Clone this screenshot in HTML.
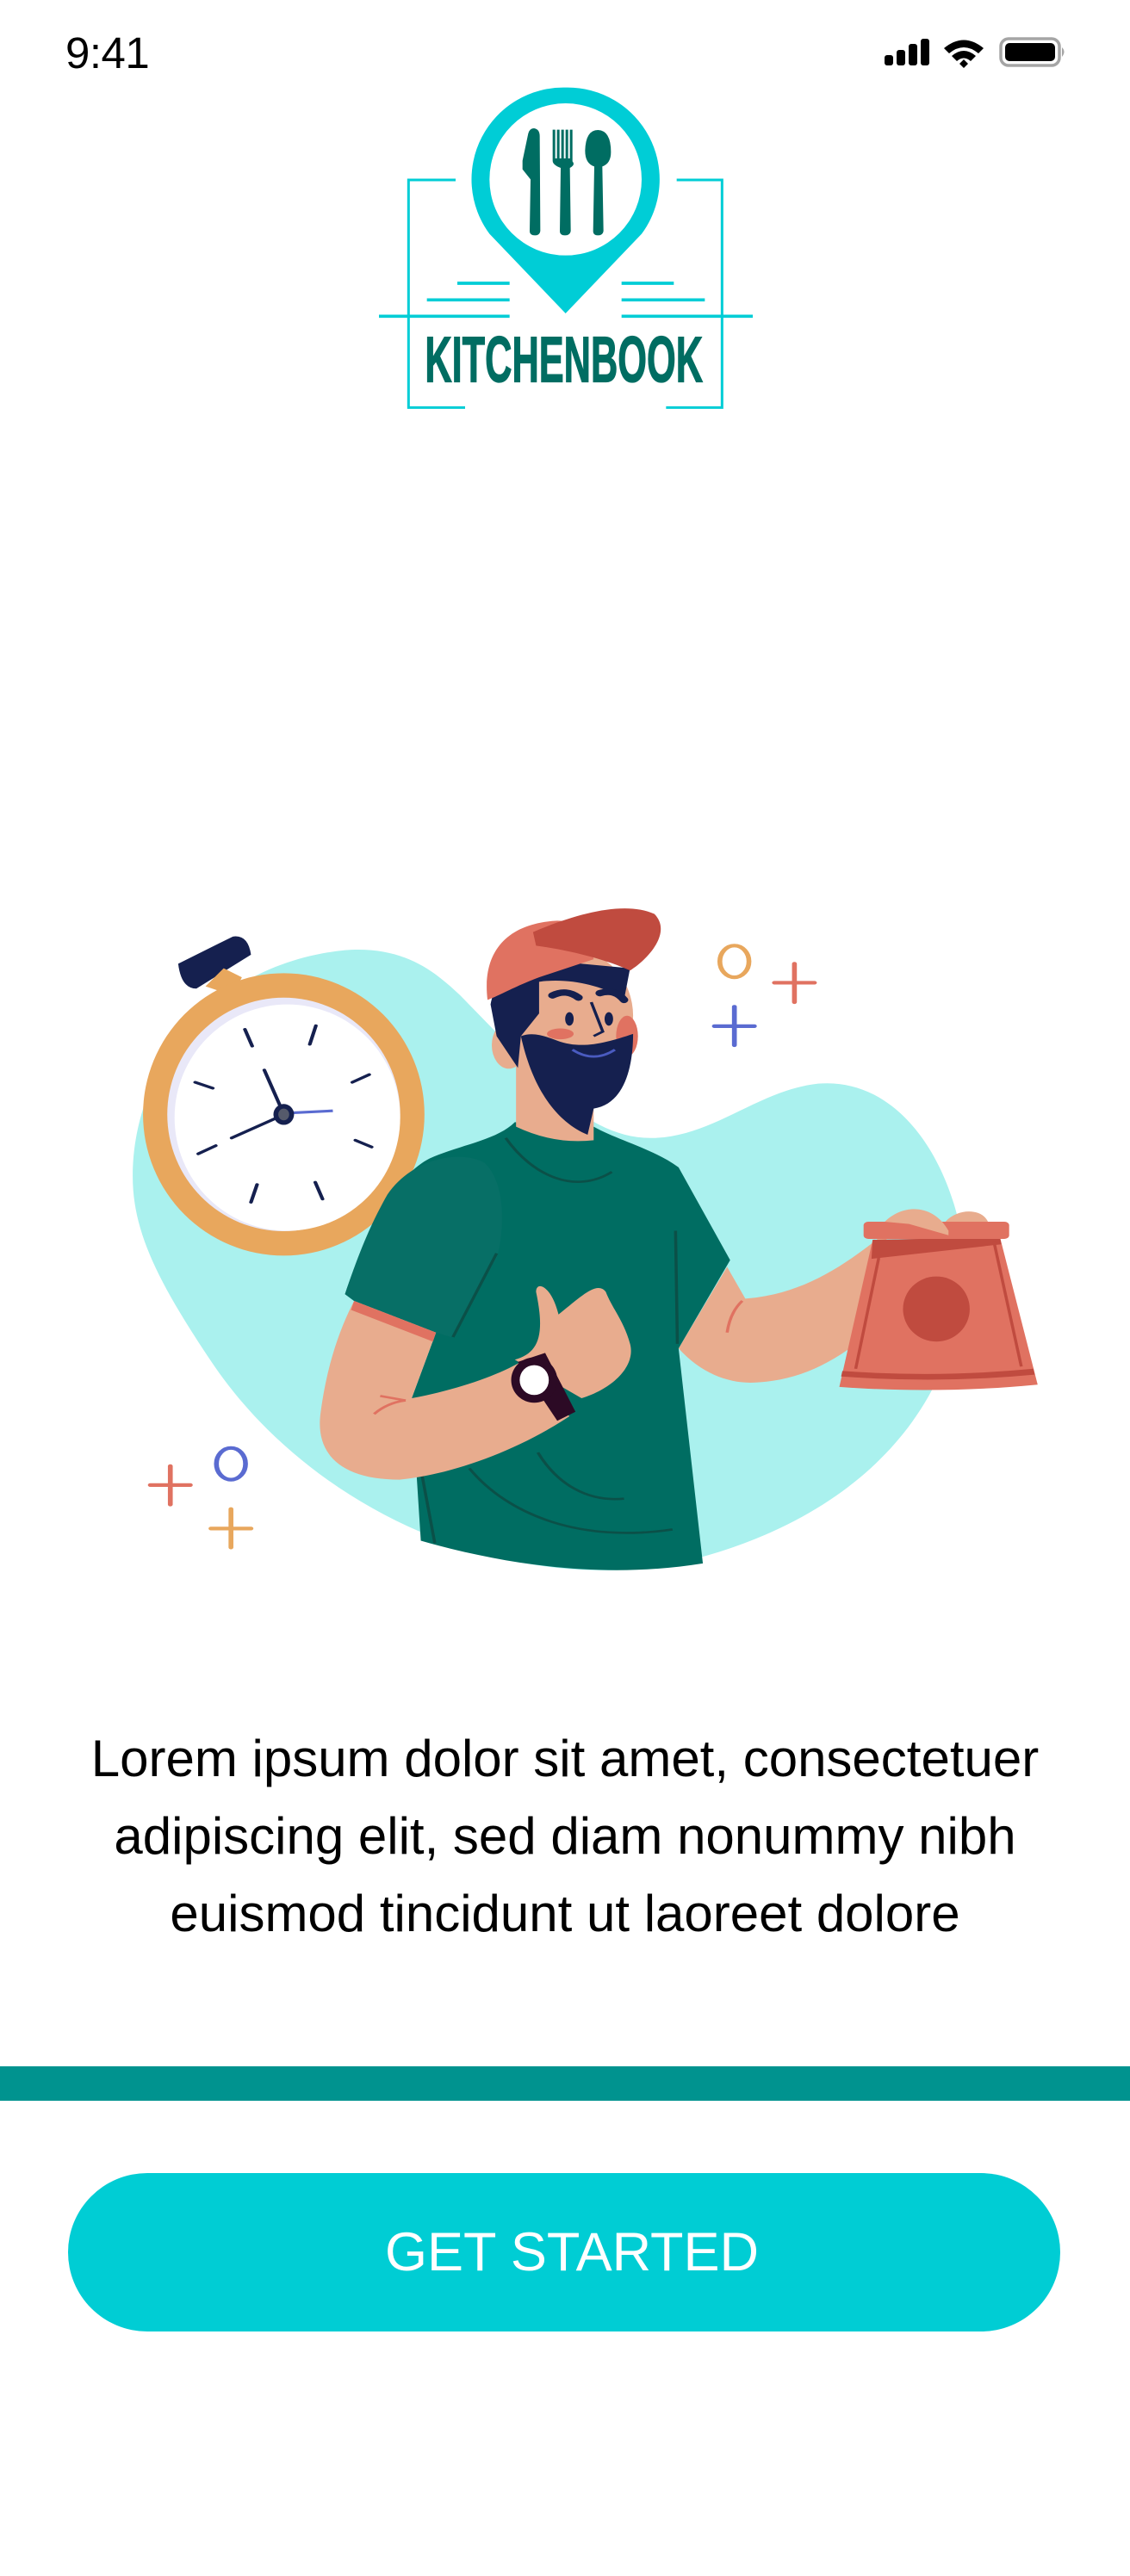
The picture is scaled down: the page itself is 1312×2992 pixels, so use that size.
<!DOCTYPE html>
<html><head><meta charset="utf-8"><style>
html,body{margin:0;padding:0;background:#fff;}
body{width:1312px;height:2992px;position:relative;overflow:hidden;font-family:"Liberation Sans",Arial,sans-serif;}
.abs{position:absolute;}
#time{left:76px;top:32px;font-size:51px;color:#000;letter-spacing:-0.5px;}
#para{left:0;top:1998px;width:1312px;text-align:center;font-size:60px;line-height:90px;color:#000;}
#bar{left:0;top:2400px;width:1312px;height:40px;background:#00938f;}
#btn{left:79px;top:2524px;width:1152px;height:184px;border-radius:92px;background:#00cdd4;color:#fff;font-size:63px;display:flex;align-items:center;justify-content:center;box-sizing:border-box;padding-left:18px;}
</style></head><body>
<div id="time" class="abs">9:41</div>
<svg class="abs" style="left:1020px;top:40px" width="230" height="45" viewBox="0 0 230 45">
 <rect x="7" y="24" width="10" height="12" rx="3" fill="#000"/>
 <rect x="21" y="18" width="10" height="18" rx="3" fill="#000"/>
 <rect x="35" y="11" width="10" height="25" rx="3" fill="#000"/>
 <rect x="49" y="5" width="10" height="31" rx="3" fill="#000"/>
 <path d="M76 16 Q99 -3 122 16 L116 22 Q99 8 82 22Z M85 25 Q99 13 113 25 L107 31 Q99 24 91 31Z M94 34 L99 29 L104 34 L99 39Z" fill="#000"/>
 <rect x="142" y="5" width="68" height="31" rx="9" fill="none" stroke="#a5a5a5" stroke-width="3.5"/>
 <rect x="147" y="10" width="58" height="21" rx="5" fill="#000"/>
 <path d="M213 15 Q218 20 213 26Z" fill="#a5a5a5"/>
</svg>

<svg class="abs" style="left:420px;top:80px" width="480" height="420" viewBox="0 0 1440 1260">
 <g stroke="#00cdd6" fill="none">
  <path d="M327 387 H163 V1180 H360 M1097 387 H1255 V1180 H1060" stroke-width="9"/>
  <path d="M333 747 H515 M905 747 H1087 M227 805 H515 M905 805 H1195 M60 862 H515 M905 862 H1362" stroke-width="11"/>
 </g>
 <path d="M710 65 A320 320 0 0 1 975 575 L710 852 L445 575 A320 320 0 0 1 710 65Z" fill="#00cdd6"/>
 <circle cx="710" cy="385" r="265" fill="#fff"/>
 <g fill="#006d62">
  <path d="M600 207 Q620 210 620 235 L622 565 Q620 580 604 580 Q585 580 585 565 L588 385 L560 350 L560 320 L580 225 Q585 207 600 207Z"/>
  <path d="M665 212 h9 v100 h6 v-100 h9 v100 h6 v-100 h9 v100 h6 v-100 h9 v100 h6 v-100 h9 v110 Q745 335 725 345 L728 565 Q726 580 708 580 Q690 580 690 565 L693 345 Q665 335 665 320Z"/>
  <path d="M823 213 Q868 215 868 290 Q868 330 838 340 L842 565 Q840 580 823 580 Q806 580 806 565 L810 340 Q778 330 778 285 Q780 213 823 213Z"/>
 </g>
 <text x="220" y="1090" textLength="968" lengthAdjust="spacingAndGlyphs" font-family="Liberation Sans Narrow,Liberation Sans,sans-serif" font-weight="bold" font-size="225" fill="#006d62" stroke="#006d62" stroke-width="4">KITCHENBOOK</text>
</svg>

<svg class="abs" style="left:140px;top:1030px" width="1100" height="820" viewBox="0 0 1562 1560" preserveAspectRatio="none">
 <path d="M20 640 C20 400 150 170 370 140 C470 130 520 190 560 240 L640 350 C700 440 780 560 880 555 C980 550 1050 450 1150 435 C1280 420 1370 600 1390 800 C1400 1100 1250 1400 900 1500 C600 1560 300 1350 150 1050 C60 870 20 760 20 640Z" fill="#aaf1ee"/>
 <path d="M95 170 L185 110 Q210 105 215 150 L125 225 Q100 225 95 170Z" fill="#15204f"/>
 <path d="M140 220 L170 180 L200 200 L185 240Z" fill="#e8a75d"/>
 <ellipse cx="269" cy="503" rx="232" ry="312" fill="#e8a75d"/>
 <ellipse cx="269" cy="503" rx="192" ry="258" fill="#e9e8f8"/>
 <ellipse cx="275" cy="510" rx="186" ry="250" fill="#fff"/>
 <g stroke="#15204f" stroke-width="6" stroke-linecap="round">
  <path d="M205 315 L217 352 M322 307 L312 348 M123 432 L152 445 M410 415 L382 432 M128 590 L157 572 M387 560 L414 575 M225 658 L215 697 M321 653 L333 690 M237 405 L265 490 M183 555 L255 512"/>
 </g>
 <path d="M275 500 L350 495" stroke="#5a6bd1" stroke-width="6"/>
 <ellipse cx="269" cy="503" rx="17" ry="23" fill="#15204f"/><ellipse cx="269" cy="503" rx="9" ry="13" fill="#555a6b"/>
 <path d="M1000 840 L920 1020 C960 1080 1010 1100 1050 1095 C1120 1090 1180 1050 1240 980 L1265 760 C1200 830 1130 900 1030 910Z" fill="#e8ac8e"/>
 <path d="M1025 915 Q1005 940 1000 985" stroke="#e07261" stroke-width="5" fill="none"/>
 <path d="M370 900 C400 780 450 640 510 600 C560 570 620 560 650 520 L780 530 C820 560 880 580 920 620 L1005 825 L920 1020 L960 1495 C800 1530 640 1500 495 1445 L480 1130 L520 985 L385 915Z" fill="#006d62"/>
 <path d="M440 680 C480 600 560 580 600 610 C640 660 630 780 620 820 L545 995 L520 985 L385 915 L370 900 C390 820 410 750 440 680Z" fill="#076f66"/>
 <g stroke="#0b5048" stroke-width="5" fill="none">
  <path d="M635 555 C680 640 750 680 810 630 M620 810 L548 995 M915 760 L918 1010 M688 1250 C720 1320 770 1360 830 1352 M575 1285 C640 1390 760 1450 910 1420 M497 1300 L518 1450"/>
 </g>
 <path d="M652 370 L780 370 L780 560 Q715 570 652 530Z" fill="#e8ac8e"/>
 <ellipse cx="640" cy="350" rx="28" ry="52" fill="#e8ac8e"/>
 <ellipse cx="745" cy="285" rx="100" ry="145" fill="#e8ac8e"/>
 <ellipse cx="835" cy="330" rx="18" ry="45" fill="#e07261"/>
 <path d="M610 260 C620 180 690 150 760 170 L840 180 L830 250 C800 220 740 200 690 210 L690 280 L660 330 L655 400 L620 330Z" fill="#15204f"/>
 <path d="M660 330 C680 450 720 520 770 548 L780 490 C830 480 845 400 845 325 C800 345 760 360 720 340 C700 330 680 320 660 330Z" fill="#15204f"/>
 <path d="M745 360 Q780 390 815 360" stroke="#4a5bc0" stroke-width="5" fill="none"/>
 <ellipse cx="725" cy="325" rx="22" ry="12" fill="#e07261"/>
 <ellipse cx="740" cy="292" rx="7" ry="15" fill="#15204f"/><ellipse cx="805" cy="292" rx="7" ry="15" fill="#15204f"/>
 <path d="M712 240 Q735 225 755 245 M790 235 Q815 225 830 250" stroke="#15204f" stroke-width="14" fill="none" stroke-linecap="round"/>
 <path d="M776 255 L795 320 L780 330" stroke="#15204f" stroke-width="5" fill="none"/>
 <path d="M605 250 C595 140 640 80 720 75 C760 75 775 120 780 160 L690 200 C650 220 625 240 605 250Z" fill="#e07261"/>
 <path d="M680 100 C750 60 830 30 880 60 C910 100 870 160 840 185 C800 160 740 140 685 130Z" fill="#c04b3f"/>
 <path d="M385 915 L520 985 L480 1130 C560 1110 620 1080 660 1050 L740 1170 C650 1250 540 1300 460 1310 C360 1310 320 1250 330 1160 C340 1060 360 980 385 915Z" fill="#e8ac8e"/>
 <path d="M385 915 L520 985 L515 1005 L380 935Z" fill="#e07261"/>
 <path d="M470 1135 Q440 1140 418 1165 M428 1125 L470 1135" stroke="#e07261" stroke-width="5" fill="none"/>
 <path d="M650 1045 C690 1030 700 990 685 895 C685 870 710 880 722 945 C760 905 785 870 800 895 C810 930 830 960 840 1010 C850 1060 810 1110 760 1130Z" fill="#e8ac8e"/>
 <path d="M655 1050 L700 1030 L750 1160 L720 1180Z" fill="#2c0a25"/>
 <ellipse cx="682" cy="1090" rx="38" ry="50" fill="#2c0a25"/><ellipse cx="682" cy="1090" rx="24" ry="33" fill="#fff"/>
 <path d="M1240 780 L1450 775 L1512 1100 C1400 1115 1280 1115 1185 1105Z" fill="#e07261"/>
 <path d="M1240 780 L1450 775 L1452 790 L1238 822Z" fill="#c04b3f"/>
 <path d="M1190 1070 Q1350 1085 1505 1065 L1507 1078 Q1350 1098 1188 1082Z" fill="#c04b3f"/>
 <path d="M1250 820 L1212 1065 M1440 785 L1485 1060" stroke="#c04b3f" stroke-width="5"/>
 <rect x="1225" y="740" width="240" height="38" rx="8" fill="#e07261"/>
 <path d="M1260 740 C1290 700 1340 700 1365 760 L1365 770 L1300 745Z M1360 740 C1380 710 1420 710 1430 740Z" fill="#e8ac8e"/>
 <ellipse cx="1345" cy="933" rx="55" ry="72" fill="#c04b3f"/>
 <g fill="none" stroke-width="8" stroke-linecap="round">
  <ellipse cx="1012" cy="165" rx="24" ry="35" stroke="#e8a75d"/>
  <ellipse cx="182" cy="1275" rx="24" ry="35" stroke="#5a6bd1"/>
  <path d="M1111 170 V255 M1078 212 H1144" stroke="#e07261"/>
  <path d="M1012 265 V350 M979 308 H1045" stroke="#5a6bd1"/>
  <path d="M82 1280 V1365 M49 1322 H115" stroke="#e07261"/>
  <path d="M182 1375 V1460 M149 1418 H215" stroke="#e8a75d"/>
 </g>
</svg>

<div id="para" class="abs">Lorem ipsum dolor sit amet, consectetuer<br>adipiscing elit, sed diam nonummy nibh<br>euismod tincidunt ut laoreet dolore</div>
<div id="bar" class="abs"></div>
<div id="btn" class="abs">GET STARTED</div>
</body></html>
